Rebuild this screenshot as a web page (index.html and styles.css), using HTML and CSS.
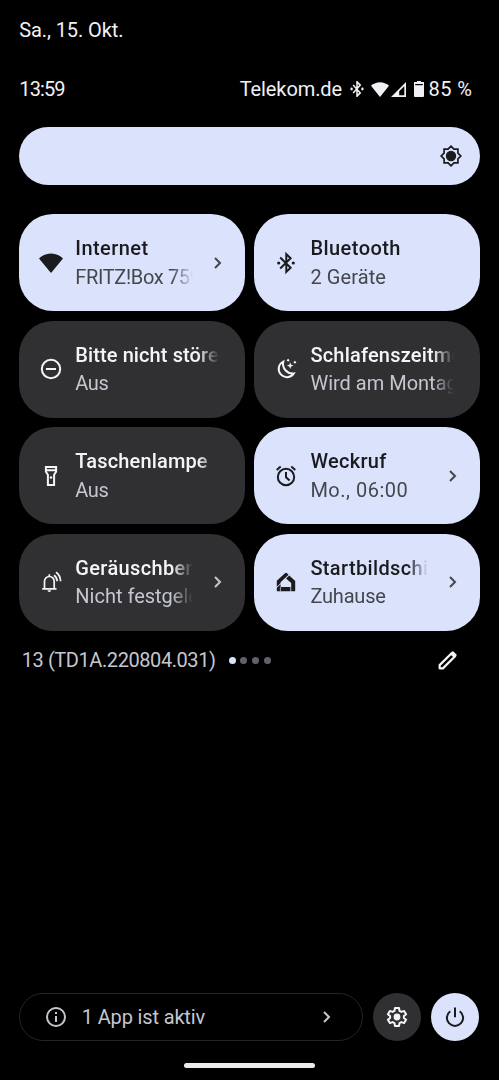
FILE: index.html
```html
<!DOCTYPE html>
<html lang="de">
<head>
  <meta charset="UTF-8">
  <meta name="viewport" content="width=device-width, initial-scale=1.0">
  <title>Schnelleinstellungen</title>
  <link rel="stylesheet" href="styles.css">
</head>
<body>
  <div class="date">Sa., 15. Okt.</div>
  <div class="status">
    <span class="clock">13:59</span>
    <span class="carrier">Telekom.de</span>
    <svg class="s-bt" viewBox="1 1 22 22" preserveAspectRatio="none"><path d="M6 6.5l11 10.8-5 4.5V2.2l5 4.5L6 17.5" fill="none" stroke="currentColor" stroke-width="2.4"/><circle cx="3.5" cy="12" r="1.9" fill="currentColor"/><circle cx="20.5" cy="12" r="1.9" fill="currentColor"/></svg>
    <svg class="s-wifi" viewBox="0 0 18 15"><path d="M9 15L0 3.8C5-1.1 13-1.1 18 3.8z" fill="currentColor"/></svg>
    <svg class="s-cell" viewBox="0 0 15 15"><path d="M0 15L15 0v15zM8.2 13.3h5.1V4.2L8.2 9.2z" fill="currentColor" fill-rule="evenodd"/></svg>
    <svg class="s-bat" viewBox="0 0 10 16"><path d="M0 2.6h10V15q0 1-1 1H1q-1 0-1-1z" fill="currentColor"/><path d="M3 0h4v1h3v3.2H0V1h3z" fill="currentColor"/><path d="M1.2 3h7.6v1.2H1.2z" fill="#000"/></svg>
    <span class="percent">85 %</span>
  </div>

  <div class="slider">
    <svg viewBox="0 0 24 24"><path d="M12 2.2l2.9 2.9h4v4l2.9 2.9-2.9 2.9v4h-4L12 21.8l-2.9-2.9h-4v-4L2.200 12l2.900-2.900v-4h4z" fill="none" stroke="currentColor" stroke-width="1.7"/><circle cx="12" cy="12" r="5.2" fill="currentColor"/></svg>
  </div>

  <div class="tiles">
    <div class="tile on">
      <svg class="icon" viewBox="0 0 24 24"><path d="M12 22L0 7.4C6.5.8 17.5.8 24 7.4z" fill="currentColor"/></svg>
      <div class="label"><div class="title t-internet">Internet</div><div class="sub t-fritz">FRITZ!Box 7590</div></div>
      <svg class="chevron" viewBox="0 0 8 12"><path d="M1 1l5 5-5 5"/></svg>
    </div>
    <div class="tile on">
      <svg class="icon" viewBox="0 0 24 24"><path d="M6.2 6.5l10.4 10.2-4.3 4.2V3.1l4.3 4.2L6.2 17.5" class="line"/><circle cx="4.7" cy="12" r="1.6" fill="currentColor"/><circle cx="19.3" cy="12" r="1.6" fill="currentColor"/></svg>
      <div class="label"><div class="title t-blue">Bluetooth</div><div class="sub t-devices">2 Geräte</div></div>
    </div>
    <div class="tile">
      <svg class="icon" viewBox="0 0 24 24"><circle cx="12" cy="12" r="9.2" class="line"/><path d="M7 12h10" class="line"/></svg>
      <div class="label"><div class="title t-dnd">Bitte nicht stören</div><div class="sub t-off">Aus</div></div>
    </div>
    <div class="tile">
      <svg class="icon" viewBox="0 0 24 24"><path d="M9.3 4.600A8.200 8.200 0 1 0 19.800 16.400A9.600 9.600 0 0 1 9.300 4.600z" class="line"/><path d="M16.200 5.200l.9 2.500 2.500.9-2.500.9-.9 2.500-.9-2.500-2.500-.9 2.500-.9z" fill="currentColor"/><path d="M14.100 1.800l1.500 1.500-1.500 1.500-1.500-1.500zM20.900 3.800l1.500 1.500-1.500 1.500-1.500-1.500z" fill="currentColor"/></svg>
      <div class="label"><div class="title t-sleep">Schlafenszeitmodus</div><div class="sub">Wird am Montag aktiviert</div></div>
    </div>
    <div class="tile">
      <svg class="icon" viewBox="0 0 24 24"><path d="M6.9 3h10.200v4.800l-2 3V21H8.900V10.800l-2-3zM7 6.300h10" class="line"/><circle cx="12" cy="13.5" r="1.3" fill="currentColor"/></svg>
      <div class="label"><div class="title t-torch">Taschenlampe</div><div class="sub t-off">Aus</div></div>
    </div>
    <div class="tile on">
      <svg class="icon" viewBox="0 0 24 24"><circle cx="12" cy="13" r="8.200" class="line"/><path d="M12 8v5.200l3.600 3.200M2.700 6l4-3.400M21.300 6l-4-3.400" class="line"/></svg>
      <div class="label"><div class="title t-alarm">Weckruf</div><div class="sub t-time">Mo., 06:00</div></div>
      <svg class="chevron" viewBox="0 0 8 12"><path d="M1 1l5 5-5 5"/></svg>
    </div>
    <div class="tile">
      <svg class="icon" viewBox="0 0 24 24"><path d="M3.200 18.800h14.300M5.500 18.800v-7.300a4.850 5 0 0 1 9.700 0v7.300M10.300 6.500V4.300" class="line thin"/><path d="M8.500 20.300h3.600a1.800 1.800 0 0 1-3.600 0z" fill="currentColor"/><path d="M15 5.200c2 1.400 3.100 3.400 3.200 6M17 2.300c2.800 2 4.400 4.800 4.600 8.900" class="line thin"/></svg>
      <div class="label"><div class="title t-noise">Geräuschbenachrichtigungen</div><div class="sub">Nicht festgelegt</div></div>
      <svg class="chevron" viewBox="0 0 8 12"><path d="M1 1l5 5-5 5"/></svg>
    </div>
    <div class="tile on">
      <svg class="icon" viewBox="0 0 24 24"><path d="M2.800 10.800L11 3.300q1-.9 2 0l1.600 1.500-8 7.400v1L2.800 16.800z" fill="currentColor"/><path d="M15.300 5.500l5.900 5.400v9.500q0 .9-.9.900h-3.100v-8.300L12 8.500z" fill="currentColor"/><path d="M2.800 17.800l3.800-3.500v2.700h9.800v4.300H3.700q-.9 0-.9-.9z" fill="currentColor"/><path d="M6.400 17v4.300" class="seam"/></svg>
      <div class="label"><div class="title t-home">Startbildschirm</div><div class="sub t-zuhause">Zuhause</div></div>
      <svg class="chevron" viewBox="0 0 8 12"><path d="M1 1l5 5-5 5"/></svg>
    </div>
  </div>

  <div class="build">
    <span class="version">13 (TD1A.220804.031)</span>
    <div class="dots"><i class="active"></i><i></i><i></i><i></i></div>
    <svg class="edit" viewBox="0 0 24 24"><path d="M3.800 20.200v-3.400L16 4.600l3.400 3.400L7.200 20.200z" fill="none" stroke="currentColor" stroke-width="2.3" stroke-linejoin="round"/><path d="M14.500 4.900l2-2q1-.9 2 0l2.600 2.600q.9 1 0 2l-2 2z" fill="currentColor"/></svg>
  </div>

  <div class="footer">
    <div class="apps">
      <svg class="info" viewBox="0 0 24 24"><circle cx="12" cy="12" r="9" class="line"/><path d="M12 11v6M12 7v2" class="line"/></svg>
      <span class="active-apps">1 App ist aktiv</span>
      <svg class="chevron" viewBox="0 0 8 12"><path d="M1 1l5 5-5 5"/></svg>
    </div>
    <div class="round">
      <svg viewBox="0 0 24 24"><path d="M10 3h4l.5 2.800 1.900 1.100 2.700-1 2 3.400-2.200 1.800v1.800l2.200 1.800-2 3.400-2.700-1-1.900 1.100L14 21h-4l-.5-2.800-1.900-1.100-2.700 1-2-3.400 2.200-1.800v-1.800L2.900 9.300l2-3.400 2.700 1 1.900-1.100z" class="line" stroke-linejoin="round"/><circle cx="12" cy="12" r="3.4" fill="currentColor"/></svg>
    </div>
    <div class="round power">
      <svg viewBox="0 0 24 24"><path d="M12 2.500v9.700M7.300 6.200a8.100 8.100 0 1 0 9.400 0" class="line"/></svg>
    </div>
  </div>
  <div class="nav-handle"></div>
</body>
</html>
```
FILE: styles.css
```css
* { box-sizing: border-box; }
body { font-family: Roboto, sans-serif; display: flex; flex-direction: column; height: 1080px; margin: 0; padding: 0 19.3px; background: #000; color: #f1f0f4; font-size: 20px; overflow: hidden; white-space: nowrap; }
svg { display: block; flex: none; }
.line { fill: none; stroke: currentColor; stroke-width: 2; }
.thin { stroke-width: 1.7; }
.seam { stroke: #dbe2fc; stroke-width: 0.7; }

.date { height: 30px; line-height: 30px; margin-top: 14.5px; letter-spacing: -0.1px; }
.status { display: flex; align-items: center; height: 30px; margin-top: 29.5px; padding-right: 7.5px; }
.clock { letter-spacing: -0.9px; }
.carrier { margin-left: auto; letter-spacing: -0.1px; }
.s-bt { width: 14px; height: 16px; margin-left: 7.5px; }
.s-wifi { width: 18px; height: 15px; margin-left: 7px; }
.s-cell { width: 15px; height: 15px; margin-left: 2px; }
.s-bat { width: 10px; height: 16px; margin-left: 8.5px; }
.percent { margin-left: 4.5px; letter-spacing: 0.4px; }

.slider { display: flex; align-items: center; justify-content: flex-end; height: 58px; margin-top: 23px; padding-right: 17px; border-radius: 29px; background: #dbe2fc; color: #1b1b1f; }
.slider svg { width: 24px; height: 24px; }

.tiles { display: grid; grid-template-columns: 1fr 1fr; grid-auto-rows: 96.8px; gap: 9.8px; margin-top: 29.2px; }
.tile { display: flex; align-items: center; min-width: 0; padding: 0 23px 0 19.5px; border-radius: 34px; background: #303032; color: #f5f4f8; }
.tile.on { background: #dbe2fc; color: #1b1b1f; }
.icon { width: 24px; height: 24px; }
.label { flex: 1; min-width: 0; margin: 0 3px 0 12.5px; overflow: hidden; line-height: 28.5px; mask-image: linear-gradient(to right, #000 calc(100% - 21px), transparent); }
.title { font-weight: 500; }
.sub { color: #c4c6d0; }
.on .sub { color: #46474d; }
.chevron { width: 8px; height: 12px; margin-left: 17.5px; color: #c4c6d0; }
.chevron path { fill: none; stroke: currentColor; stroke-width: 2; }
.on .chevron { color: #46474d; }

/* tracking per label */
.t-internet, .t-blue { letter-spacing: 0.45px; }
.t-dnd { letter-spacing: 0.1px; }
.t-sleep { letter-spacing: 0.2px; }
.t-torch { letter-spacing: 0.15px; }
.t-alarm { letter-spacing: 0.3px; }
.t-noise { letter-spacing: 0.35px; }
.t-home { letter-spacing: 0.35px; }
.t-fritz { letter-spacing: -0.35px; }
.t-devices { letter-spacing: 0.1px; }
.t-time { letter-spacing: 0.5px; }
.t-off { letter-spacing: -0.4px; }
.t-zuhause { letter-spacing: -0.2px; }

.build { display: flex; align-items: center; height: 30px; margin-top: 14.5px; padding: 0 21px 0 2.5px; color: #c4c6d0; }
.version { letter-spacing: -0.43px; }
.dots { display: flex; gap: 4.8px; margin-left: 13px; }
.dots i { width: 7px; height: 7px; border-radius: 50%; background: #60626b; }
.dots .active { background: #dbe2fc; }
.edit { width: 23px; height: 23px; margin-left: auto; color: #f5f4f8; }

.footer { display: flex; align-items: center; height: 48px; margin-top: auto; }
.apps { display: flex; align-items: center; width: 343.7px; height: 48px; padding: 0 31px 0 23.5px; border: 1px solid #242426; border-radius: 24px; color: #c4c6d0; }
.info { width: 24px; height: 24px; }
.active-apps { margin-left: 14px; letter-spacing: -0.15px; }
.apps .chevron { margin-left: auto; }
.round { display: flex; align-items: center; justify-content: center; width: 48.5px; height: 48.5px; margin-left: 10px; border-radius: 50%; background: #303032; color: #f5f4f8; }
.round svg { width: 24px; height: 24px; }
.power { margin-left: 9.5px; background: #dbe2fc; color: #1b1b1f; }
.nav-handle { align-self: center; width: 131px; height: 5px; margin: 21.5px 0 12.5px; border-radius: 3px; background: #ebebeb; }
```
